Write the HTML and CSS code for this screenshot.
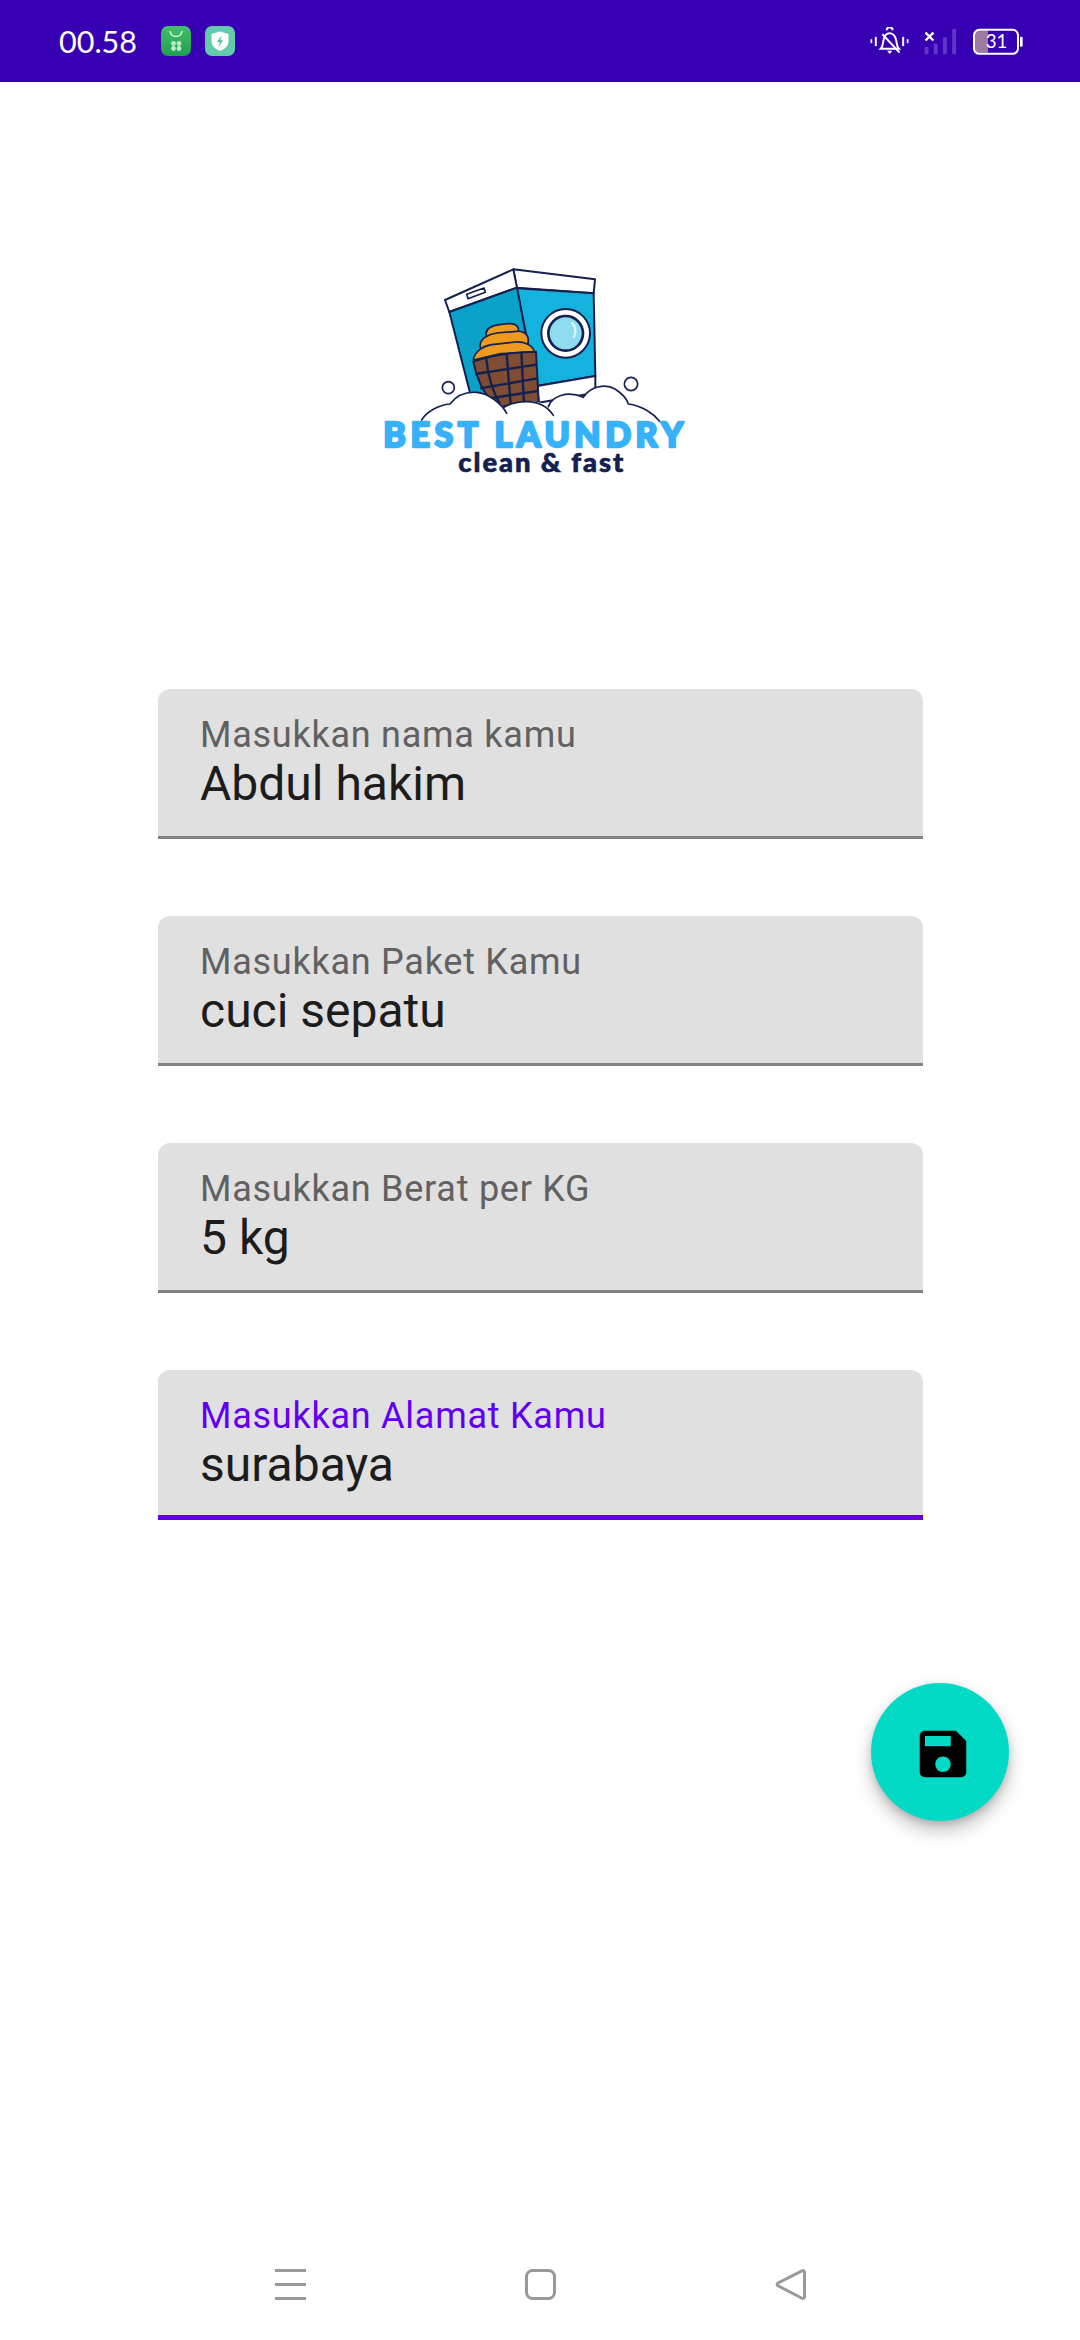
FILE: index.html
```html
<!DOCTYPE html>
<html lang="id">
<head>
    <meta charset="UTF-8">
    <meta name="viewport" content="width=device-width, initial-scale=1.0">
    <title>Best Laundry</title>
    <link rel="stylesheet" href="styles.css">
</head>
<body>
    <div class="status-bar">
        <div class="status-left">
            <span class="time">00.58</span>
            <svg class="app-icon" viewBox="0 0 30 30">
                <defs>
                    <linearGradient id="storeGreen" x1="0" y1="0" x2="0" y2="1">
                        <stop offset="0" stop-color="#45c06a"/>
                        <stop offset="1" stop-color="#1f9f4c"/>
                    </linearGradient>
                </defs>
                <rect width="30" height="30" rx="7" fill="url(#storeGreen)"/>
                <path d="M9 5c.6 4 3 5.500 6 5.500s5.400-1.500 6-5.500" fill="none" stroke="#d8f5df" stroke-width="1.500"/>
                <circle cx="12.500" cy="17.500" r="2.400" fill="#b9ecc8"/>
                <circle cx="18" cy="17.500" r="2.400" fill="#b9ecc8"/>
                <circle cx="12.500" cy="22.500" r="2.400" fill="#b9ecc8"/>
                <circle cx="18" cy="22.500" r="2.400" fill="#b9ecc8"/>
            </svg>
            <svg class="app-icon" viewBox="0 0 30 30">
                <rect width="30" height="30" rx="7" fill="#62cbaa"/>
                <path d="M15 5.500l8.500 2.500v7c0 5-3.800 8-8.500 10-4.700-2-8.500-5-8.500-10V8z" fill="#fff"/>
                <path d="M16.500 9.500l-4.500 6.500h2.800l-1.300 5 4.600-6.800h-2.800z" fill="#4cbf9b"/>
            </svg>
        </div>
        <div class="status-right">
            <svg class="bell-icon" viewBox="205 80 123 85">
                <g fill="none" stroke="#fff" stroke-width="6">
                    <path d="M240 146c8-8 6-20 9-29 3-12 11-18 18-18s16 6 19 18c3 9 1 21 9 29z"/>
                    <path d="M258 90a9 9 0 0 1 18 0"/>
                    <path d="M245 102l52 56"/>
                </g>
                <path d="M259 152h16l-8 10z" fill="#fff"/>
                <g fill="#fff">
                    <rect x="209" y="117" width="5" height="12"/>
                    <rect x="222" y="110" width="6" height="28"/>
                    <rect x="305" y="110" width="6" height="28"/>
                    <rect x="319" y="117" width="5" height="12"/>
                </g>
            </svg>
            <svg class="signal-icon" viewBox="368 80 102 82">
                <g fill="#5f37c4">
                    <rect x="372" y="138" width="12" height="22" rx="3"/>
                    <rect x="400" y="128" width="12" height="32" rx="3"/>
                    <rect x="428" y="108" width="12" height="52" rx="3"/>
                    <rect x="456" y="83" width="12" height="77" rx="3"/>
                </g>
                <path d="M375 94l24 24M399 94l-24 24" stroke="#fff" stroke-width="7" fill="none"/>
            </svg>
            <svg class="battery-icon" viewBox="512 80 156 80">
                <rect x="520" y="88" width="40" height="66" fill="#9d7aa0"/>
                <rect x="518" y="85" width="132" height="72" rx="16" fill="none" stroke="#fff" stroke-width="6"/>
                <rect x="656" y="106" width="8" height="30" rx="3" fill="#fff"/>
                <text class="battery-text" x="553" y="139">31</text>
            </svg>
        </div>
    </div>

    <div class="logo-wrap">
        <svg class="logo" viewBox="0 0 1080 720">
            <g stroke="#14204f" stroke-width="6" stroke-linejoin="round">
                <!-- mesin kanan -->
                <path d="M460 58l245 30-4 42-231-17z" fill="#fff"/>
                <path d="M470 115l231 15 5 248-176 30z" fill="#14b3de"/>
                <path d="M532 408l174-30v50l-170 30z" fill="#fff"/>
                <!-- mesin kiri -->
                <path d="M255 150L460 58l11 55-203 73z" fill="#fff"/>
                <path d="M268 186l203-73 65 345-206-30z" fill="#0ba2c9"/>
                <path d="M320 133l52-19 4 13-52 19z" fill="#fff" stroke-width="5"/>
                <circle cx="617" cy="250" r="73" fill="#fff"/>
                <circle cx="617" cy="250" r="56" fill="#14204f" stroke="none"/>
                <circle cx="617" cy="250" r="48" fill="#8edcf0" stroke="none"/>
                <path d="M634 218c14 10 16 30 6 46" fill="none" stroke="#d9f6fc" stroke-width="7"/>
                <!-- cucian -->
                <path d="M378 250c2-18 25-25 45-27 25-3 47-5 52 12 3 12-8 20-20 20l-60 5c-10 0-18-2-17-10z" fill="#ee9a1f" stroke-width="5"/>
                <path d="M360 285c2-20 25-32 50-36l60-5c20-2 35 8 35 28 0 14-10 20-25 20l-100 8c-12 0-21-4-20-15z" fill="#ee9a1f" stroke-width="5"/>
                <path d="M340 330c3-25 30-42 55-46l70-8c28-2 55 10 58 30l-100 5-83 19z" fill="#ee9a1f" stroke-width="5"/>
                <!-- keranjang -->
                <path d="M340 335c60-20 125-30 188-30l8 150-120 15c-30-20-60-60-76-135z" fill="#7f4d33"/>
                <path d="M346 372l182-28M360 415l172-30M388 445l146-22M378 322c5 45 15 95 42 140M440 312l12 152M484 306l8 155" fill="none" stroke-width="7"/>
            </g>
            <!-- busa -->
            <path d="M185 510C200 485 235 465 270 462 290 435 320 425 350 427 385 430 420 460 432 472 460 455 520 440 565 470 575 440 620 420 670 442 690 410 735 400 765 417 785 430 800 445 805 462 845 467 880 490 900 515V560H185z" fill="#fff"/>
            <g fill="none" stroke="#14204f" stroke-width="5" stroke-linecap="round">
                <path d="M185 510C200 485 235 465 270 462 290 435 320 425 350 427 385 430 425 460 440 490"/>
                <path d="M432 472C460 455 540 435 580 496"/>
                <path d="M565 470C575 440 620 420 670 442 690 410 735 400 765 417 785 430 800 445 805 462 845 467 880 490 900 515"/>
                <circle cx="265" cy="413" r="18"/>
                <circle cx="813" cy="402" r="20"/>
            </g>
            <text class="logo-title" x="70" y="591" textLength="900" lengthAdjust="spacing">BEST LAUNDRY</text>
            <text class="logo-sub" x="295" y="665" textLength="495" lengthAdjust="spacing">clean &amp; fast</text>
        </svg>
    </div>

    <div class="form">
        <div class="field">
            <div class="field-label">Masukkan nama kamu</div>
            <div class="field-value">Abdul hakim</div>
        </div>
        <div class="field">
            <div class="field-label">Masukkan Paket Kamu</div>
            <div class="field-value">cuci sepatu</div>
        </div>
        <div class="field">
            <div class="field-label">Masukkan Berat per KG</div>
            <div class="field-value">5 kg</div>
        </div>
        <div class="field field-active">
            <div class="field-label">Masukkan Alamat Kamu</div>
            <div class="field-value">surabaya</div>
        </div>
    </div>

    <div class="fab-row">
        <button class="fab">
            <svg class="fab-icon" viewBox="0 0 24 24">
                <path d="M17 3H5c-1.110 0-2 .9-2 2v14c0 1.100.89 2 2 2h14c1.100 0 2-.9 2-2V7l-4-4zm-5 16c-1.660 0-3-1.340-3-3s1.340-3 3-3 3 1.340 3 3-1.340 3-3 3zm3-10H5V5h10v4z"/>
            </svg>
        </button>
    </div>

    <div class="nav-bar">
        <svg class="nav-icon" viewBox="0 0 31 31">
            <path d="M0 1.500h31M0 15.500h31M0 29.500h31" fill="none" stroke="#999" stroke-width="3"/>
        </svg>
        <svg class="nav-icon" viewBox="0 0 31 31">
            <rect x="1.500" y="1.500" width="28" height="28" rx="6" fill="none" stroke="#999" stroke-width="3"/>
        </svg>
        <svg class="nav-icon" viewBox="0 0 31 31">
            <path d="M27 1.800c1.300-.7 2.500 0 2.500 1.500v24.400c0 1.500-1.200 2.200-2.500 1.500L3 16.800c-1.300-.8-1.300-2 0-2.800z" fill="none" stroke="#999" stroke-width="3"/>
        </svg>
    </div>
</body>
</html>
```

FILE: styles.css
```css
body { margin: 0; min-height: 2340px; display: flex; flex-direction: column; background-color: #fff; font-family: Roboto, sans-serif; }

.status-bar { height: 82px; background-color: #3700b3; color: #fff; display: flex; justify-content: space-between; align-items: center; padding: 0 56px 0 59px; }
.status-left { display: flex; align-items: center; gap: 14px; }
.time { font-size: 30.5px; width: 78px; margin-right: 10px; font-family: Lato, sans-serif; }
.app-icon { width: 30px; height: 30px; }
.status-right { display: flex; align-items: center; }
.bell-icon { width: 41px; height: 28px; margin-right: 13px; }
.signal-icon { width: 34px; height: 27px; margin-right: 15px; }
.battery-icon { width: 52px; height: 27px; }
.battery-text { font-family: Lato, sans-serif; font-size: 56px; fill: #fff; }

.logo-wrap { display: flex; justify-content: center; margin-top: 168px; }
.logo { width: 360px; height: 240px; }
.logo-title { font-family: Lato, sans-serif; font-weight: 900; font-size: 102px; fill: #38b1fb; stroke: #38b1fb; stroke-width: 7px; stroke-linejoin: round; }
.logo-sub { font-family: Lato, sans-serif; font-weight: 900; font-size: 82px; fill: #14204f; stroke: #14204f; stroke-width: 2px; }

.form { margin: 199px 157px 0 158px; display: flex; flex-direction: column; gap: 77px; }
.field { height: 150px; box-sizing: border-box; padding: 26px 42px 0; background-color: #e0e0e0; border-radius: 12px 12px 0 0; border-bottom: 3px solid #828282; }
.field-label { font-size: 36px; line-height: 40px; letter-spacing: 0.75px; color: #616161; }
.field-value { font-size: 48px; line-height: 50px; margin-top: 4px; color: #1c1c1c; }
.field-active { border-bottom: 5px solid #6200ee; }
.field-active .field-label { color: #6200ee; }

.fab-row { display: flex; justify-content: flex-end; padding-right: 71px; margin-top: 163px; }
.fab { width: 138px; height: 138px; box-sizing: border-box; border: none; border-radius: 50%; padding: 4px 0 0 5px; background-color: #03dac5; display: flex; align-items: center; justify-content: center; box-shadow: 0 9px 18px rgba(0, 0, 0, 0.25), 0 3px 6px rgba(0, 0, 0, 0.12); }
.fab-icon { width: 62px; height: 62px; fill: #000; }

.nav-bar { margin-top: auto; padding-bottom: 40px; display: flex; justify-content: center; gap: 219px; }
.nav-icon { width: 31px; height: 31px; }
```
